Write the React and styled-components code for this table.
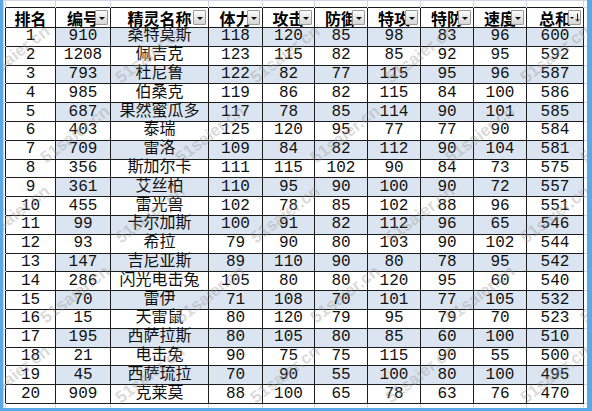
import React from 'react';
import styled, { createGlobalStyle } from 'styled-components';

const GlobalStyle = createGlobalStyle`
  html, body {
    margin: 0;
    padding: 0;
    background: #fff;
  }
  body {
    font-family: "Liberation Mono", "Noto Sans CJK SC", monospace;
  }
`;

const Frame = styled.div`
  position: relative;
  width: 592px;
  height: 411px;
  box-sizing: border-box;
  border-left: 3px solid #5aa9e6;
  border-right: 5px solid #5aa9e6;
  border-bottom: 3px solid #5aa9e6;
  overflow: hidden;
  background: #fff;
`;

const Sheet = styled.table`
  border-collapse: collapse;
  table-layout: fixed;
  width: 584px;
`;

const Col = styled.col`
  width: ${(p) => p.$w}px;
`;

const StubRow = styled.tr`
  height: ${(p) => p.$h}px;
`;

const HeadRow = styled.tr`
  height: 20px;
`;

const DataRow = styled.tr`
  height: 18.8px;
`;

const Stub = styled.td`
  padding: 0;
  border: 1px solid #d0d7e5;
  ${(p) => p.$side === 'left' && 'border-right: none;'}
  ${(p) => p.$side === 'right' && 'border-left: none;'}
  ${(p) => p.$side === 'top' && 'border-bottom: none;'}
  ${(p) => p.$side === 'bottom' && 'border-top: none;'}
`;

const Cell = styled.td`
  padding: 0;
  border: 1px solid #1c1c1c;
  background: ${(p) => (p.$band ? '#dbe5f1' : '#fff')};
  color: #111;
  font-size: 16px;
  line-height: 17px;
  text-align: center;
  white-space: nowrap;
`;

const HeadCell = styled.td`
  position: relative;
  padding: 0;
  border: 1px solid #1c1c1c;
  background: #fff;
  color: #000;
  font-family: "Noto Sans CJK SC", sans-serif;
  font-weight: 700;
  font-size: 16px;
  line-height: 18px;
  text-align: center;
  white-space: nowrap;
`;

const FilterBtn = styled.span`
  position: absolute;
  right: 2px;
  top: 2px;
  width: 13px;
  height: 15px;
  box-sizing: border-box;
  border: 1px solid #9a9a9a;
  border-radius: 1px;
  background: linear-gradient(#fbfbfb, #d6d6d6);
  display: flex;
  align-items: center;
  justify-content: center;
  gap: 1px;
`;

const Caret = styled.span`
  width: 0;
  height: 0;
  border-left: 3px solid transparent;
  border-right: 3px solid transparent;
  border-top: 3px solid #111;
  margin-top: 1px;
`;

const SmallCaret = styled(Caret)`
  border-left-width: 2px;
  border-right-width: 2px;
  border-top-width: 2px;
`;

const Watermarks = styled.div`
  position: absolute;
  inset: 0;
  pointer-events: none;
  overflow: hidden;
`;

const Mark = styled.span`
  position: absolute;
  font-family: "Liberation Sans", sans-serif;
  font-weight: 700;
  font-size: 17px;
  color: rgba(150, 150, 150, 0.36);
  transform: rotate(-38deg);
  transform-origin: left center;
  white-space: nowrap;
`;

const headers = [
  { label: '排名' },
  { label: '编号', filter: true },
  { label: '精灵名称', filter: true },
  { label: '体力', filter: true },
  { label: '攻击', filter: true },
  { label: '防御', filter: true },
  { label: '特攻', filter: true },
  { label: '特防', filter: true },
  { label: '速度', filter: true },
  { label: '总和', filter: true, sorted: true },
];

const widths = [50, 55, 98, 54, 52, 53, 53, 53, 53, 57];

const rows = [
  [1, 910, '桑特莫斯', 118, 120, 85, 98, 83, 96, 600],
  [2, 1208, '佩吉克', 123, 115, 82, 85, 92, 95, 592],
  [3, 793, '杜尼鲁', 122, 82, 77, 115, 95, 96, 587],
  [4, 985, '伯桑克', 119, 86, 82, 115, 84, 100, 586],
  [5, 687, '果然蜜瓜多', 117, 78, 85, 114, 90, 101, 585],
  [6, 403, '泰瑞', 125, 120, 95, 77, 77, 90, 584],
  [7, 709, '雷洛', 109, 84, 82, 112, 90, 104, 581],
  [8, 356, '斯加尔卡', 111, 115, 102, 90, 84, 73, 575],
  [9, 361, '艾丝柏', 110, 95, 90, 100, 90, 72, 557],
  [10, 455, '雷光兽', 102, 78, 85, 102, 88, 96, 551],
  [11, 99, '卡尔加斯', 100, 91, 82, 112, 96, 65, 546],
  [12, 93, '希拉', 79, 90, 80, 103, 90, 102, 544],
  [13, 147, '吉尼亚斯', 89, 110, 90, 80, 78, 95, 542],
  [14, 286, '闪光电击兔', 105, 80, 80, 120, 95, 60, 540],
  [15, 70, '雷伊', 71, 108, 70, 101, 77, 105, 532],
  [16, 15, '天雷鼠', 80, 120, 79, 95, 79, 70, 523],
  [17, 195, '西萨拉斯', 80, 105, 80, 85, 60, 100, 510],
  [18, 21, '电击兔', 90, 75, 75, 115, 90, 55, 500],
  [19, 45, '西萨琉拉', 70, 90, 55, 100, 80, 100, 495],
  [20, 909, '克莱莫', 88, 100, 65, 78, 63, 76, 470],
];

// faint site watermark tiled over the sheet
const marks = [];
for (let r = 0; r < 6; r++) {
  for (let c = 0; c < 6; c++) {
    marks.push({ x: -20 + c * 135 + (r % 2) * 60, y: 70 + r * 80 });
  }
}

const SortIcon = () => (
  <svg width="5" height="9" viewBox="0 0 5 9">
    <path d="M2.5 0.5V8M0.8 6.2L2.5 8.2L4.2 6.2" stroke="#222" strokeWidth="1" fill="none" />
  </svg>
);

export default function App() {
  return (
    <>
      <GlobalStyle />
      <Frame>
        <Sheet>
          <colgroup>
            <Col $w={2} />
            {widths.map((w, i) => (
              <Col key={i} $w={w} />
            ))}
            <Col $w={4} />
          </colgroup>
          <tbody>
            <StubRow $h={7}>
              <Stub $side="left" />
              {widths.map((w, i) => (
                <Stub key={i} $side="top" />
              ))}
              <Stub $side="right" />
            </StubRow>
            <HeadRow>
              <Stub $side="left" />
              {headers.map((h) => (
                <HeadCell key={h.label}>
                  {h.label}
                  {h.filter && (
                    <FilterBtn>
                      {h.sorted ? (
                        <>
                          <SmallCaret />
                          <SortIcon />
                        </>
                      ) : (
                        <Caret />
                      )}
                    </FilterBtn>
                  )}
                </HeadCell>
              ))}
              <Stub $side="right" />
            </HeadRow>
            {rows.map((row) => (
              <DataRow key={row[0]}>
                <Stub $side="left" />
                {row.map((v, i) => (
                  <Cell key={i} $band={i > 0 && row[0] % 2 === 1}>
                    {v}
                  </Cell>
                ))}
                <Stub $side="right" />
              </DataRow>
            ))}
            <StubRow $h={8}>
              <Stub $side="left" />
              {widths.map((w, i) => (
                <Stub key={i} $side="bottom" />
              ))}
              <Stub $side="right" />
            </StubRow>
          </tbody>
        </Sheet>
        <Watermarks>
          {marks.map((m, i) => (
            <Mark key={i} style={{ left: m.x, top: m.y }}>
              51saier.cn
            </Mark>
          ))}
        </Watermarks>
      </Frame>
    </>
  );
}
